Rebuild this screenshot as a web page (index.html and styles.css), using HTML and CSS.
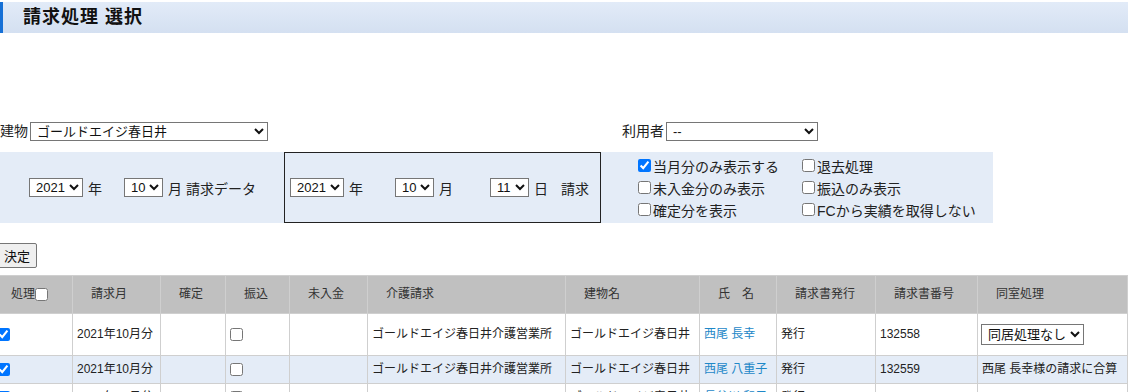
FILE: index.html
```html
<!DOCTYPE html>
<html lang="ja">
<head>
    <meta charset="UTF-8">
    <meta name="viewport" content="width=device-width, initial-scale=1.0">
    <title>請求処理 選択</title>
    <link rel="stylesheet" href="styles.css">
</head>
<body>
    <div class="title-bar">
        <h1>請求処理 選択</h1>
    </div>

    <div class="filter-row">
        <div class="filter-building">
            <label for="building">建物</label>
            <select id="building" class="sel-building">
                <option>ゴールドエイジ春日井</option>
            </select>
        </div>
        <div class="filter-user">
            <label for="user">利用者</label>
            <select id="user" class="sel-user">
                <option>--</option>
            </select>
        </div>
    </div>

    <div class="period-panel">
        <div class="period-data">
            <span class="unit unit-year-a">
                <select class="sel-year"><option>2021</option></select>年
            </span>
            <span class="unit">
                <select class="sel-small"><option>10</option></select>月 請求データ
            </span>
        </div>
        <div class="period-bill">
            <span class="unit unit-year-b">
                <select class="sel-year"><option>2021</option></select>年
            </span>
            <span class="unit unit-month">
                <select class="sel-small"><option>10</option></select>月
            </span>
            <span class="unit unit-day">
                <select class="sel-small"><option>11</option></select>日
            </span>
            <span class="unit">請求</span>
        </div>
        <div class="options">
            <label class="opt"><input type="checkbox" checked>当月分のみ表示する</label>
            <label class="opt"><input type="checkbox">退去処理</label>
            <label class="opt"><input type="checkbox">未入金分のみ表示</label>
            <label class="opt"><input type="checkbox">振込のみ表示</label>
            <label class="opt"><input type="checkbox">確定分を表示</label>
            <label class="opt"><input type="checkbox">FCから実績を取得しない</label>
        </div>
    </div>

    <div class="actions">
        <button type="button">決定</button>
    </div>

    <table class="bill-table">
        <colgroup>
            <col style="width: 80px">
            <col style="width: 88px">
            <col style="width: 65px">
            <col style="width: 64px">
            <col style="width: 78px">
            <col style="width: 198px">
            <col style="width: 134px">
            <col style="width: 77px">
            <col style="width: 99px">
            <col style="width: 102px">
            <col style="width: 150px">
        </colgroup>
        <thead>
            <tr>
                <th class="th-first">処理<input type="checkbox"></th>
                <th>請求月</th>
                <th>確定</th>
                <th>振込</th>
                <th>未入金</th>
                <th>介護請求</th>
                <th>建物名</th>
                <th>氏　名</th>
                <th>請求書発行</th>
                <th>請求書番号</th>
                <th>同室処理</th>
            </tr>
        </thead>
        <tbody>
            <tr>
                <td><input type="checkbox" checked></td>
                <td>2021年10月分</td>
                <td></td>
                <td><input type="checkbox"></td>
                <td></td>
                <td>ゴールドエイジ春日井介護営業所</td>
                <td>ゴールドエイジ春日井</td>
                <td><a href="#">西尾 長幸</a></td>
                <td>発行</td>
                <td>132558</td>
                <td>
                    <select class="sel-room"><option>同居処理なし</option></select>
                </td>
            </tr>
            <tr class="row-alt">
                <td><input type="checkbox" checked></td>
                <td>2021年10月分</td>
                <td></td>
                <td><input type="checkbox"></td>
                <td></td>
                <td>ゴールドエイジ春日井介護営業所</td>
                <td>ゴールドエイジ春日井</td>
                <td><a href="#">西尾 八重子</a></td>
                <td>発行</td>
                <td>132559</td>
                <td>西尾 長幸様の請求に合算</td>
            </tr>
            <tr>
                <td><input type="checkbox" checked></td>
                <td>2021年10月分</td>
                <td></td>
                <td><input type="checkbox"></td>
                <td></td>
                <td></td>
                <td>ゴールドエイジ春日井</td>
                <td><a href="#">長谷川 和子</a></td>
                <td>発行</td>
                <td>132560</td>
                <td></td>
            </tr>
        </tbody>
    </table>
</body>
</html>
```

FILE: styles.css
```css
body {
    font-family: "Liberation Sans", "Noto Sans CJK JP", sans-serif;
    color: #222;
    margin: 0;
    padding: 0;
    overflow: hidden;
}

.title-bar {
    margin-top: 2px;
    height: 31px;
    border-left: 3px solid #1670d6;
    background: linear-gradient(#e2ebf8, #d4e0f1);
    padding-left: 20px;
}

.title-bar h1 {
    margin: 0;
    font-size: 18px;
    font-weight: bold;
    letter-spacing: 1px;
    line-height: 30px;
    color: #111;
}

select {
    height: 19px;
    font-family: inherit;
    font-size: 13px;
    color: #111;
    background: #fff;
    border: 1px solid #767676;
    border-radius: 0;
    padding: 0 0 0 2px;
    margin: 0;
}

.filter-row {
    display: flex;
    margin-top: 89px;
    height: 19px;
    font-size: 14px;
    line-height: 19px;
}

.filter-building {
    display: flex;
    width: 622px;
}

.filter-user {
    display: flex;
}

.filter-row label {
    margin-right: 2px;
}

.sel-building {
    width: 238px;
}

.sel-user {
    width: 152px;
}

.period-panel {
    display: flex;
    width: 993px;
    height: 71px;
    margin-top: 11px;
    background: #e4ecf7;
    font-size: 14px;
}

.unit {
    display: flex;
    align-items: center;
    gap: 5px;
    white-space: nowrap;
}

.period-data {
    display: flex;
    align-items: center;
    width: 255px;
    padding-left: 29px;
}

.unit-year-a {
    width: 95px;
}

.period-bill {
    display: flex;
    align-items: center;
    width: 310px;
    padding-left: 5px;
    border: 1px solid #222;
}

.unit-year-b {
    width: 105px;
}

.unit-month {
    width: 95px;
}

.unit-day {
    width: 71px;
}

.sel-year {
    width: 54px;
}

.sel-small {
    width: 39px;
}

.options {
    display: grid;
    grid-template-columns: 164px auto;
    align-content: center;
    margin-left: 33px;
}

.opt {
    display: flex;
    align-items: center;
    height: 22px;
    white-space: nowrap;
}

.opt input {
    margin: 0 2px 0 4px;
}

.actions {
    display: flex;
    margin-top: 20px;
}

button {
    height: 25px;
    margin-left: -3px;
    font-family: inherit;
    font-size: 13px;
    padding: 0 6px;
    background: #efefef;
    border: 1px solid #767676;
    border-radius: 2px;
    color: #111;
}

.bill-table {
    margin-top: 7px;
    margin-left: -8px;
    width: 1135px;
    table-layout: fixed;
    border-collapse: collapse;
    font-size: 12px;
}

.bill-table th,
.bill-table td {
    border: 1px solid #cfcfcf;
    line-height: 17px;
    white-space: nowrap;
    overflow: hidden;
}

.bill-table th {
    background: #c0c0c0;
    color: #333;
    font-weight: normal;
    text-align: left;
    padding: 10px 4px 10px 18px;
}

.th-first input {
    margin: 0;
    vertical-align: -3px;
}

.bill-table td {
    padding: 5px 4px;
}

.bill-table td input {
    margin: 0;
    vertical-align: middle;
}

.row-alt td {
    background: #e4ecf7;
}

.bill-table a {
    color: #1e88c8;
    text-decoration: none;
}

.sel-room {
    width: 103px;
    height: 21px;
    margin: 5px 0 5px -1px;
}
```
